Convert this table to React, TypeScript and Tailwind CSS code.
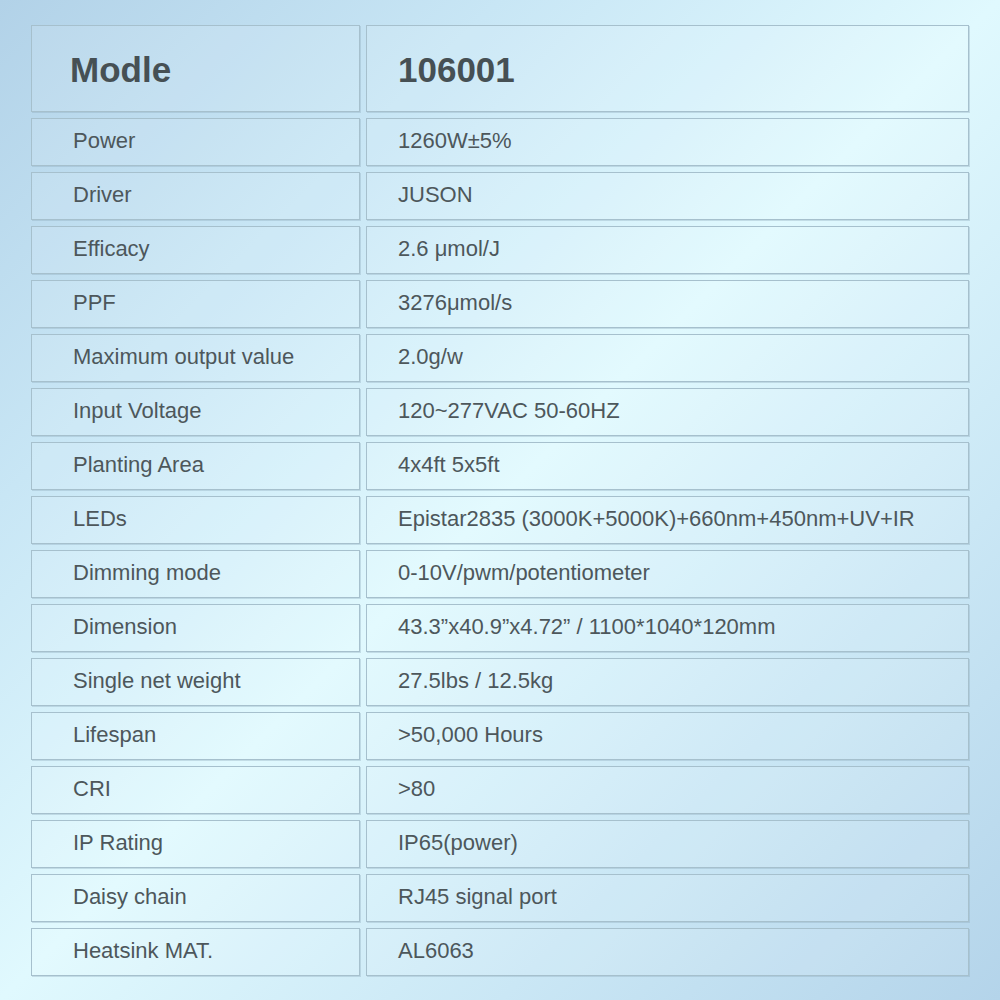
const specs: [string, string][] = [
  ["Power", "1260W±5%"],
  ["Driver", "JUSON"],
  ["Efficacy", "2.6 μmol/J"],
  ["PPF", "3276μmol/s"],
  ["Maximum output value", "2.0g/w"],
  ["Input Voltage", "120~277VAC 50-60HZ"],
  ["Planting Area", "4x4ft 5x5ft"],
  ["LEDs", "Epistar2835 (3000K+5000K)+660nm+450nm+UV+IR"],
  ["Dimming mode", "0-10V/pwm/potentiometer"],
  ["Dimension", "43.3”x40.9”x4.72” / 1100*1040*120mm"],
  ["Single net weight", "27.5lbs / 12.5kg"],
  ["Lifespan", ">50,000 Hours"],
  ["CRI", ">80"],
  ["IP Rating", "IP65(power)"],
  ["Daisy chain", "RJ45 signal port"],
  ["Heatsink MAT.", "AL6063"],
];

// thin grey-blue frame, slightly heavier on bottom/right like the original
const cell =
  "flex items-center border border-[#a6c0cd] bg-white/10 shadow-[1px_1px_0_rgba(140,170,185,0.35)]";

export default function App() {
  return (
    <div
      className="h-[1000px] w-[1000px] bg-[linear-gradient(135deg,#b2d2e8_0%,#c8e6f5_25%,#e0f9fe_50%,#cae7f5_75%,#b4d4ea_100%)] pl-[31px] pt-[25px] text-[#4d575b]"
      style={{ fontFamily: '"Liberation Sans", Arial, sans-serif' }}
    >
      <div className="grid w-[938px] grid-cols-[329px_603px] gap-[6px]">
        <div className={`${cell} h-[87px] pl-[38px] pt-[3px]`}>
          <span className="text-[35px] font-bold text-[#465054]">Modle</span>
        </div>
        <div className={`${cell} h-[87px] pl-[31px] pt-[3px]`}>
          <span className="text-[35px] font-bold text-[#465054]">106001</span>
        </div>
        {specs.map(([label, value]) => (
          <div key={label} className="contents">
            <div className={`${cell} h-[48px] pl-[41px] pb-[4px]`}>
              <span className="text-[22px]">{label}</span>
            </div>
            <div className={`${cell} h-[48px] pl-[31px] pb-[3px]`}>
              <span className="text-[22px]">{value}</span>
            </div>
          </div>
        ))}
      </div>
    </div>
  );
}
